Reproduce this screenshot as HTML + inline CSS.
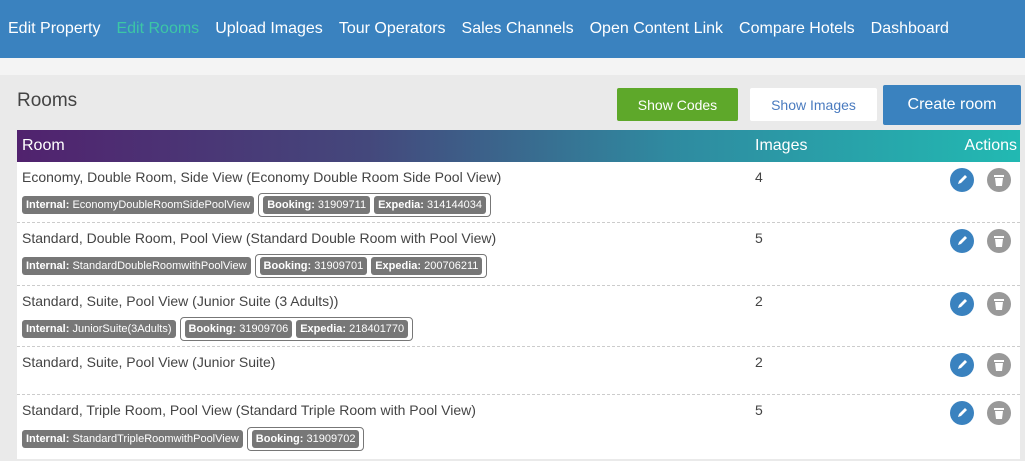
<!DOCTYPE html>
<html><head><meta charset="utf-8"><style>
*{box-sizing:border-box;margin:0;padding:0}
body{width:1025px;height:461px;overflow:hidden;background:#eaeaea;font-family:"Liberation Sans",sans-serif;color:#444}
.nav{height:58px;background:#3a82bf;display:flex;align-items:center;padding-left:8px;font-size:16px;color:#fff}
.nav span{margin-right:16px;white-space:nowrap}
.nav .act{color:#3cc6a6}
.strip{height:17px;background:#f4f4f4}
h2{position:absolute;left:17px;top:90px;font-size:19px;font-weight:normal;color:#444}
.btn{position:absolute;font-size:14px;display:flex;align-items:center;justify-content:center;border-radius:2px}
.b1{left:617px;top:88px;width:121px;height:33px;background:#5ea82a;color:#fff}
.b2{left:750px;top:88px;width:127px;height:33px;background:#fff;color:#4a7bbf}
.b3{left:883px;top:85px;width:138px;height:40px;background:#3a82bf;color:#fff;font-size:16px}
.tbl{position:absolute;left:17px;top:130px;width:1003px;background:#fff}
.th{height:32px;background:linear-gradient(90deg,#51226e 0%,#44487c 35%,#2f8aa0 65%,#22b9b2 100%);color:#fff;font-size:16px;position:relative}
.th span{position:absolute;top:7px}
.row{position:relative;border-bottom:1px dashed #ccc;font-size:14px}
.row .t{position:absolute;left:5px;top:7px;white-space:nowrap}
.row .n{position:absolute;left:738px;top:7px}
.bd{position:absolute;left:5px;display:flex;align-items:center}
.bg{background:#777;color:#fff;font-size:11px;padding:3px 4px;border-radius:3px;margin-right:4px;white-space:nowrap}
.bg b{font-weight:bold}
.grp{border:1px solid #777;border-radius:4px;padding:2px 0 2px 4px;display:flex}
.ic{position:absolute;top:6px;width:24px;height:24px;border-radius:50%;display:flex;align-items:center;justify-content:center}
.ed{left:933px;background:#3a82bf}
.dl{left:970px;background:#999}
</style></head><body>
<div class="nav"><span>Edit Property</span><span class="act">Edit Rooms</span><span>Upload Images</span><span>Tour Operators</span><span>Sales Channels</span><span>Open Content Link</span><span>Compare Hotels</span><span>Dashboard</span></div>
<div class="strip"></div>
<h2>Rooms</h2>
<div class="btn b1">Show Codes</div><div class="btn b2">Show Images</div><div class="btn b3">Create room</div>
<div class="tbl">
<div class="th"><span style="left:5px">Room</span><span style="left:738px">Images</span><span style="right:3px">Actions</span></div>

<div class="row" style="height:61px"><div class="t">Economy, Double Room, Side View (Economy Double Room Side Pool View)</div><div class="n">4</div>
<div class="bd" style="top:31px"><span class="bg"><b>Internal:</b> EconomyDoubleRoomSidePoolView</span><div class="grp"><span class="bg"><b>Booking:</b> 31909711</span><span class="bg"><b>Expedia:</b> 314144034</span></div></div>
<div class="ic ed"><svg width="12" height="12" viewBox="0 0 12 12"><path d="M2 10 L3 7 L9 1 L11 3 L5 9 Z" fill="#fff"/></svg></div><div class="ic dl"><svg width="12" height="13" viewBox="0 0 12 13"><rect x="1" y="1" width="10" height="2" fill="#fff"/><path d="M2 4 H10 L9 12 H3 Z" fill="#fff"/></svg></div></div>

<div class="row" style="height:63px"><div class="t">Standard, Double Room, Pool View (Standard Double Room with Pool View)</div><div class="n">5</div>
<div class="bd" style="top:31px"><span class="bg"><b>Internal:</b> StandardDoubleRoomwithPoolView</span><div class="grp"><span class="bg"><b>Booking:</b> 31909701</span><span class="bg"><b>Expedia:</b> 200706211</span></div></div>
<div class="ic ed"><svg width="12" height="12" viewBox="0 0 12 12"><path d="M2 10 L3 7 L9 1 L11 3 L5 9 Z" fill="#fff"/></svg></div><div class="ic dl"><svg width="12" height="13" viewBox="0 0 12 13"><rect x="1" y="1" width="10" height="2" fill="#fff"/><path d="M2 4 H10 L9 12 H3 Z" fill="#fff"/></svg></div></div>

<div class="row" style="height:61px"><div class="t">Standard, Suite, Pool View (Junior Suite (3 Adults))</div><div class="n">2</div>
<div class="bd" style="top:31px"><span class="bg"><b>Internal:</b> JuniorSuite(3Adults)</span><div class="grp"><span class="bg"><b>Booking:</b> 31909706</span><span class="bg"><b>Expedia:</b> 218401770</span></div></div>
<div class="ic ed"><svg width="12" height="12" viewBox="0 0 12 12"><path d="M2 10 L3 7 L9 1 L11 3 L5 9 Z" fill="#fff"/></svg></div><div class="ic dl"><svg width="12" height="13" viewBox="0 0 12 13"><rect x="1" y="1" width="10" height="2" fill="#fff"/><path d="M2 4 H10 L9 12 H3 Z" fill="#fff"/></svg></div></div>

<div class="row" style="height:48px"><div class="t">Standard, Suite, Pool View (Junior Suite)</div><div class="n">2</div>
<div class="ic ed"><svg width="12" height="12" viewBox="0 0 12 12"><path d="M2 10 L3 7 L9 1 L11 3 L5 9 Z" fill="#fff"/></svg></div><div class="ic dl"><svg width="12" height="13" viewBox="0 0 12 13"><rect x="1" y="1" width="10" height="2" fill="#fff"/><path d="M2 4 H10 L9 12 H3 Z" fill="#fff"/></svg></div></div>

<div class="row" style="height:64px;border:none"><div class="t">Standard, Triple Room, Pool View (Standard Triple Room with Pool View)</div><div class="n">5</div>
<div class="bd" style="top:32px"><span class="bg"><b>Internal:</b> StandardTripleRoomwithPoolView</span><div class="grp"><span class="bg"><b>Booking:</b> 31909702</span></div></div>
<div class="ic ed"><svg width="12" height="12" viewBox="0 0 12 12"><path d="M2 10 L3 7 L9 1 L11 3 L5 9 Z" fill="#fff"/></svg></div><div class="ic dl"><svg width="12" height="13" viewBox="0 0 12 13"><rect x="1" y="1" width="10" height="2" fill="#fff"/><path d="M2 4 H10 L9 12 H3 Z" fill="#fff"/></svg></div></div>
</div>
</body></html>
